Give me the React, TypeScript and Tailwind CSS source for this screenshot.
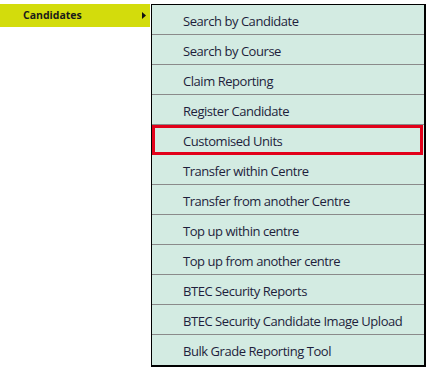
const ITEMS = [
  "Search by Candidate",
  "Search by Course",
  "Claim Reporting",
  "Register Candidate",
  "Customised Units",
  "Transfer within Centre",
  "Transfer from another Centre",
  "Top up within centre",
  "Top up from another centre",
  "BTEC Security Reports",
  "BTEC Security Candidate Image Upload",
  "Bulk Grade Reporting Tool",
];

export default function App() {
  return (
    <div className="w-[430px] h-[372px] bg-white flex items-start pt-[4px] font-['Open_Sans',sans-serif]">
      <div className="w-[150px] h-[23px] bg-[#d3dc0c] flex items-center pl-[23px] pr-[4px] text-[10.5px] font-bold text-[#1a1a1a]">
        <span className="flex-1">Candidates</span>
        <svg width="4" height="7" viewBox="0 0 4 7">
          <path d="M0 0 L4 3.5 L0 7 Z" fill="#111" />
        </svg>
      </div>
      <ul className="ml-[1px] w-[275px] border border-black border-r-2 border-b-2 bg-[#d3ebe2] text-[13px] tracking-[-0.45px] text-[#1e1e3c]">
        {ITEMS.map((item, i) => {
          const active = item === "Customised Units";
          const last = i === ITEMS.length - 1;
          return (
            <li
              key={item}
              className={
                active
                  ? "h-[30px] border-[3px] border-[#e2001a] mr-[1px] flex items-center pl-[28px] pt-[3px]"
                  : last
                    ? "h-[30px] flex items-center pl-[31px] pt-[4px]"
                    : "h-[30px] border-b border-[#8a8a8a] flex items-center pl-[31px] pt-[4px]"
              }
            >
              {item}
            </li>
          );
        })}
      </ul>
    </div>
  );
}
